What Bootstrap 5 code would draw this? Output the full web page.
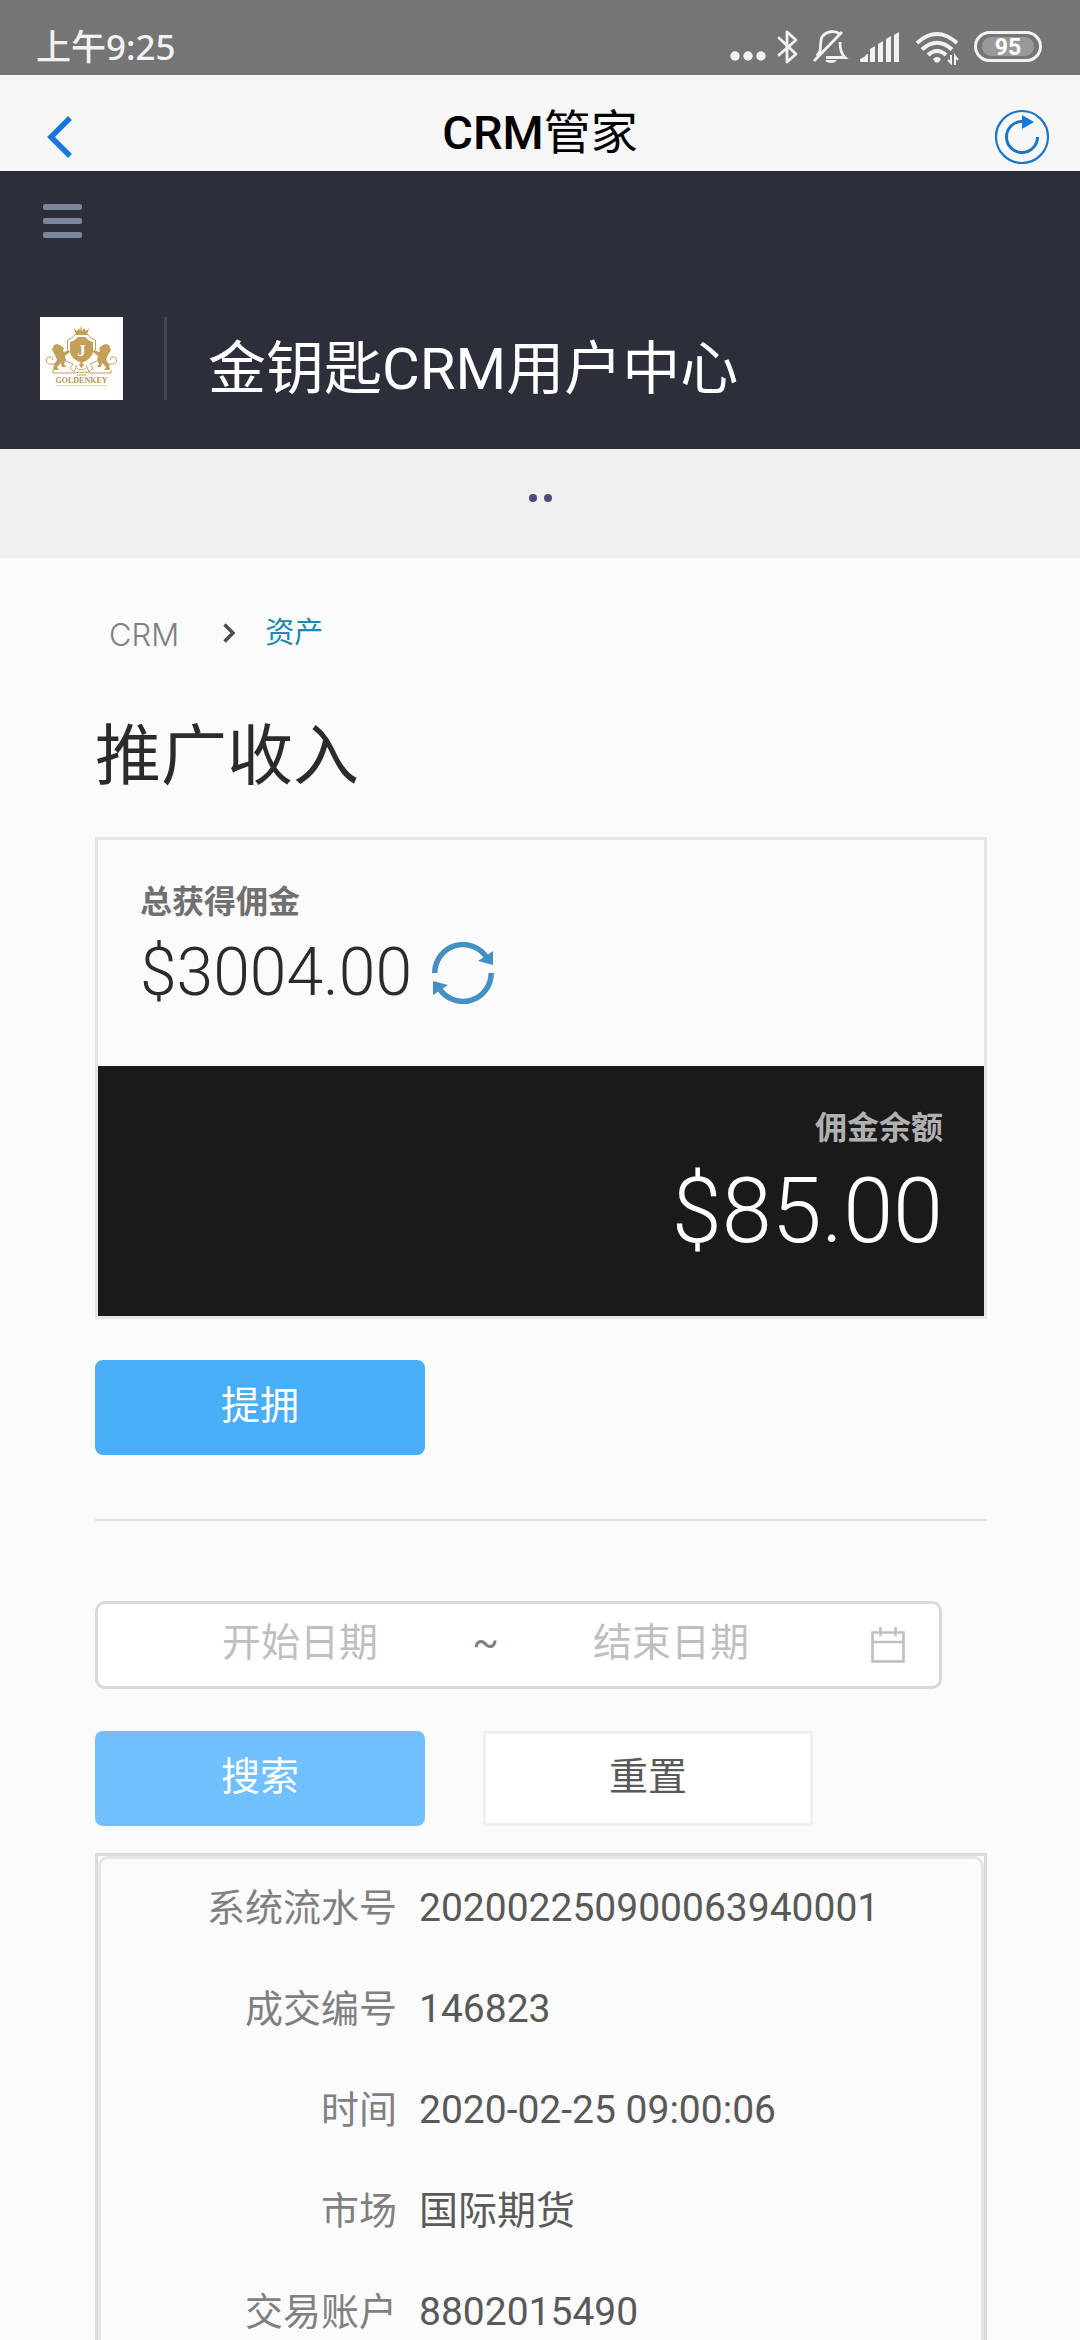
<!DOCTYPE html>
<html lang="zh-CN">
<head>
<meta charset="utf-8">
<meta name="viewport" content="width=device-width, initial-scale=1">
<title>CRM管家</title>
<link href="https://cdn.jsdelivr.net/npm/bootstrap@5.3.0/dist/css/bootstrap.min.css" rel="stylesheet">
<style>
  body { background: #fbfbfb; color: #595959; font-family: Roboto, "Noto Sans CJK SC", sans-serif; font-size: 39px; line-height: 60px; }
  svg { display: block; flex: none; }
  .status-bar { height: 75px; padding: 19px 38px 0 36px; background: #757575; color: #f2f2f2; }
  .status-time { font: 500 35px/48px "Noto Sans", "Noto Sans CJK SC", sans-serif; }
  .app-bar { height: 96px; padding: 27px 30px 0 46px; background: #f7f7f7; color: #000; }
  .app-title { font-size: 47px; line-height: 56px; font-weight: 500; padding-bottom: 8px; }
  .app-title span { font-weight: 400; }
  .bare-btn { padding: 0; border: 0; background: none; }
  .site-head { height: 278px; padding: 33px 40px 0; background: #2c2f3a; color: #fff; }
  .site-brand { padding-top: 79px; }
  .brand-rule { width: 3px; height: 83px; margin: 0 41px; background: #42454f; }
  .brand-name { padding-top: 10px; font-size: 58px; line-height: 84px; }
  .notice-strip { height: 109px; gap: 7px; padding-bottom: 12px; background: #f0f0f1; }
  .notice-dot { width: 8px; height: 8px; border-radius: 50%; background: #55487f; }
  .page-main { padding: 51px 93px 0 95px; }
  .crumbs { gap: 30px; padding-left: 14px; font-size: 29px; line-height: 48px; }
  .crumbs a { color: #808080; font-family: Inter, sans-serif; font-size: 31px; font-weight: 300; padding: 4px 14px 0 0; line-height: 44px; }
  .crumbs .here { color: #2089ae; }
  .page-title { margin: 50px 0 30px; color: #2b2b2b; font-size: 66px; line-height: 100px; font-weight: 400; }
  .sum-box { border: 3px solid #e6e6e6; }
  .sum-top { height: 226px; padding: 38px 42px 0; }
  .sum-dark { height: 250px; padding: 38px 41px 0; background: #1a1a1a; color: #fff; }
  .sum-label { color: #707070; font-size: 32px; line-height: 48px; font-weight: 700; }
  .sum-dark .sum-label { color: #b0b0b0; }
  .sum-total { gap: 20px; color: #2b2b2b; font-size: 66px; line-height: 94px; font-weight: 300; }
  .sum-balance { font-size: 90px; line-height: 120px; font-weight: 300; }
  .act-btn { width: 330px; height: 95px; padding: 0 0 4px; border: 0; border-radius: 8px; color: #fff; font-size: 39px; line-height: 60px; }
  .act-withdraw { margin-top: 41px; background: #48aef7; }
  .act-search { background: #70c0ff; }
  .act-reset { border: 3px solid #f0f0f0; border-radius: 2px; background: #fff; color: #595959; }
  .act-row { gap: 58px; margin: 42px 0 27px; }
  .page-rule { height: 2px; margin: 64px 0 80px; background: #e4e4e4; }
  .range-box { height: 88px; margin-right: 45px; padding: 0 34px 0 32px; border: 3px solid #d9d9d9; border-radius: 10px; background: #fff; }
  .range-box input { width: 0; min-width: 0; flex: 1; padding: 0 0 4px; border: 0; background: none; text-align: center; color: #595959; }
  .range-box input::placeholder { color: #bfbfbf; opacity: 1; }
  .range-tilde { width: 31px; padding-bottom: 4px; text-align: center; color: #808080; }
  .record-box { border: 3px solid #dcdcdc; border-bottom: 0; }
  .record-list { margin: 0; padding: 0 0 0 4px; border: 3px solid #e6e6e6; border-radius: 10px; }
  .record-list .row { height: 101px; padding-bottom: 3px; }
  .record-list dt { color: #808080; font-size: 38px; font-weight: 400; }
  .record-list dd { margin: 0; padding-left: 22px; }
</style>
<script src="https://cdn.jsdelivr.net/npm/bootstrap@5.3.0/dist/js/bootstrap.bundle.min.js"></script>
</head>
<body>
<div class="vh-100 overflow-hidden">

  <div class="status-bar d-flex align-items-center justify-content-between">
    <div class="status-time">上午9:25</div>
    <div class="d-flex align-items-center">
      <svg width="47" height="36" viewBox="0 0 47 36" fill="#f2f2f2"><circle cx="5" cy="27" r="4.7"/><circle cx="18" cy="27" r="4.7"/><circle cx="31" cy="27" r="4.7"/></svg>
      <svg width="36" height="36" viewBox="0 0 36 36" fill="none" stroke="#f2f2f2" stroke-width="2.8" stroke-linejoin="round" stroke-linecap="round"><path d="M2 9 19 25 10 33V3L19 11 2 26"/></svg>
      <svg width="47" height="36" viewBox="0 0 47 36" fill="none" stroke="#f2f2f2" stroke-width="2.8"><path d="M27 5C22 1 13 2 9 8 7 12 8 18 7 22L4 27M1 32 29 3M13 28.500H32C28 25 27 19 27 13"/><path d="M12 31h12c-2 4-10 4-12 0Z" fill="#f2f2f2" stroke="none"/></svg>
      <svg width="56" height="36" viewBox="0 0 56 36" fill="#f2f2f2"><path d="M0 32v-2q5-2 7-5h1v8H1zM10 33V20l5-3v16zM18 33V15l5-3v21zM26 33V10l5-3v26zM34 33V6l5-3v30z"/></svg>
      <svg width="58" height="36" viewBox="0 0 58 36" fill="none" stroke="#f2f2f2" stroke-width="4"><path d="M1 14Q21-4 41 14M6 20.500Q21 7 36 20.500M12 26Q21 18 30 26"/><path d="M17 30Q21 26 25 30L23 33Q21 34 19 33Z" fill="#f2f2f2" stroke="none"/><path d="M35 26v8l-3-3M39 36V27l3 4" stroke-width="2"/></svg>
      <svg width="68" height="32" viewBox="0 0 68 32"><rect x="1.500" y="1.500" width="65" height="28" rx="14" fill="none" stroke="#f2f2f2" stroke-width="3"/><rect x="8" y="6" width="52" height="19" rx="9" fill="#999"/><text x="34" y="24" text-anchor="middle" font-family="Roboto" font-size="23" font-weight="700" fill="#fff">95</text></svg>
    </div>
  </div>

  <header class="app-bar d-flex align-items-center justify-content-between">
    <button class="bare-btn" type="button" aria-label="返回"><svg width="40" height="42" viewBox="0 0 40 42" fill="none" stroke="#1678df" stroke-width="5.500"><path d="M24 2 5 21 24 40"/></svg></button>
    <div class="app-title">CRM<span>管家</span></div>
    <button class="bare-btn" type="button" aria-label="刷新"><svg width="56" height="56" viewBox="0 0 56 56" fill="none" stroke="#1b76c4" stroke-width="2.200"><circle cx="28" cy="28" r="26"/><path d="M43.500 28A15.500 15.500 0 1 1 28 12.500" stroke-width="3"/><path d="M28 6v14l12-7z" fill="#1678df" stroke="none"/></svg></button>
  </header>

  <div class="site-head">
    <button class="bare-btn d-block" type="button" aria-label="菜单"><svg width="46" height="34" viewBox="0 0 46 34" fill="#7d859b"><rect x="3" width="39" height="6" rx="2"/><rect x="3" y="14" width="39" height="6" rx="2"/><rect x="3" y="28" width="39" height="6" rx="2"/></svg></button>
    <div class="site-brand d-flex">
      <svg width="83" height="83" viewBox="0 0 83 83">
        <rect width="83" height="83" fill="#fff"/>
        <g fill="#c2a05a">
          <path d="M34 11l3 3 2-3 1 3 1-6 1 6 2-3 2 3 3-3-2 7H36z"/>
          <path d="M30 25q5-1 7.500-5h8q2.500 4 7.500 5v10q-1 7-11.500 11Q31 42 30 35z"/>
          <path id="lion" d="M14 28l3-1 3 1 4 3-1 3 1 1 5-2 1 2-5 4 1 4-2 4 2 3h-4l-1-4-4 4 2 3h-6l1-6 3-4-2-5-3-5z"/>
          <use href="#lion" transform="matrix(-1 0 0 1 83 0)"/>
          <path d="M39 48l2.500-3 2.500 3-2.500 3z"/>
        </g>
        <g fill="none" stroke="#c2a05a" stroke-width="1">
          <path d="M27.500 33V23q5-1 8.500-6h11q3.500 5 8.500 6v10"/>
          <path d="M14 47Q7 48 6.500 44T10 40t2 3M69 47q7 1 7.500-3T73 40t-2 3"/>
          <path d="M26 44l7 3-3 4 4 4 3-7M57 44l-7 3 3 4-4 4-3-7M37 51q4.500 4 9 0"/>
          <path d="M13 53v3h22q5-2 7 0 2-2 7 0h22v-3M37 58h9"/>
          <path d="M17 68.500h50" stroke="#e3d6b8"/>
        </g>
        <text x="41.500" y="39" text-anchor="middle" font-family="Liberation Serif" font-size="17" font-weight="700" fill="#fff">J</text>
        <text x="41.500" y="66" text-anchor="middle" font-family="Liberation Serif" font-size="8" font-weight="700" fill="#b39762">GOLDENKEY</text>
      </svg>
      <div class="brand-rule"></div>
      <div class="brand-name text-nowrap">金钥匙CRM用户中心</div>
    </div>
  </div>

  <div class="notice-strip d-flex align-items-center justify-content-center">
    <span class="notice-dot"></span><span class="notice-dot"></span>
  </div>

  <main class="page-main">
    <nav class="crumbs d-flex align-items-center" aria-label="导航">
      <a class="text-decoration-none" href="#">CRM</a>
      <svg width="12" height="20" viewBox="0 0 12 20" fill="none" stroke="#4d4d4d" stroke-width="3.500"><path d="M1.500 1.500 10 10 1.500 18.500"/></svg>
      <span class="here">资产</span>
    </nav>
    <h1 class="page-title">推广收入</h1>

    <section class="sum-box">
      <div class="sum-top">
        <div class="sum-label">总获得佣金</div>
        <div class="sum-total d-flex align-items-center">
          <span>$3004.00</span>
          <button class="bare-btn" type="button" aria-label="更新佣金"><svg width="62" height="62" viewBox="0 0 62 62"><g fill="none" stroke="#448fc4" stroke-width="5.500"><path d="M2.800 31A28.200 28.200 0 0 1 55 16M59.200 31A28.200 28.200 0 0 1 7 46"/></g><path d="M61 9v14L46 19zM1 53V39l15 4z" fill="#448fc4"/></svg></button>
        </div>
      </div>
      <div class="sum-dark text-end">
        <div class="sum-label">佣金余额</div>
        <div class="sum-balance">$85.00</div>
      </div>
    </section>

    <button class="act-btn act-withdraw d-block" type="button">提拥</button>
    <div class="page-rule"></div>

    <form>
      <div class="range-box d-flex align-items-center">
        <input type="text" placeholder="开始日期" aria-label="开始日期">
        <span class="range-tilde">~</span>
        <input type="text" placeholder="结束日期" aria-label="结束日期">
        <svg class="ms-4" width="40" height="36" viewBox="0 0 40 36" fill="none" stroke="#bfbfbf" stroke-width="2.600"><path d="M7.500 5.500h31v29h-31zM7 15h32M15.500 0v9M30.500 0v9"/></svg>
      </div>
      <div class="act-row d-flex">
        <button class="act-btn act-search" type="button">搜索</button>
        <button class="act-btn act-reset" type="reset">重置</button>
      </div>
    </form>

    <section class="record-box">
      <dl class="record-list">
        <div class="row g-0 align-items-center"><dt class="col-4 text-end">系统流水号</dt><dd class="col-8">202002250900063940001</dd></div>
        <div class="row g-0 align-items-center"><dt class="col-4 text-end">成交编号</dt><dd class="col-8">146823</dd></div>
        <div class="row g-0 align-items-center"><dt class="col-4 text-end">时间</dt><dd class="col-8">2020-02-25 09:00:06</dd></div>
        <div class="row g-0 align-items-center"><dt class="col-4 text-end">市场</dt><dd class="col-8">国际期货</dd></div>
        <div class="row g-0 align-items-center"><dt class="col-4 text-end">交易账户</dt><dd class="col-8">8802015490</dd></div>
      </dl>
    </section>
  </main>
</div>
</body>
</html>
